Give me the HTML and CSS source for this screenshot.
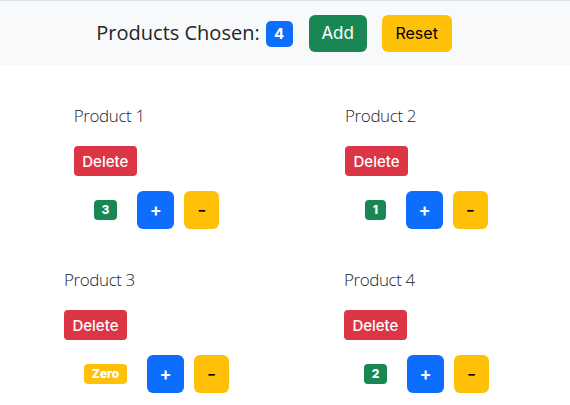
FILE: index.html
```html
<!DOCTYPE html>
<html lang="en">
<head>
<meta charset="utf-8">
<title>Products</title>
<link rel="stylesheet" href="styles.css">
</head>
<body>
  <header class="topbar">
    <span class="chosen">Products Chosen:</span>
    <span class="badge badge-lg bg-blue">4</span>
    <button class="btn btn-green btn-add">Add</button>
    <button class="btn btn-yellow btn-reset">Reset</button>
  </header>
  <main class="products">
    <div class="card">
      <h5 class="card-title">Product 1</h5>
      <button class="btn btn-red btn-delete">Delete</button>
      <div class="counter">
        <span class="badge bg-green">3</span>
        <button class="btn btn-blue btn-plus">+</button>
        <button class="btn btn-yellow btn-minus">-</button>
      </div>
    </div>
    <div class="card">
      <h5 class="card-title">Product 2</h5>
      <button class="btn btn-red btn-delete">Delete</button>
      <div class="counter">
        <span class="badge bg-green">1</span>
        <button class="btn btn-blue btn-plus">+</button>
        <button class="btn btn-yellow btn-minus">-</button>
      </div>
    </div>
    <div class="card">
      <h5 class="card-title">Product 3</h5>
      <button class="btn btn-red btn-delete">Delete</button>
      <div class="counter">
        <span class="badge bg-yellow">Zero</span>
        <button class="btn btn-blue btn-plus">+</button>
        <button class="btn btn-yellow btn-minus">-</button>
      </div>
    </div>
    <div class="card">
      <h5 class="card-title">Product 4</h5>
      <button class="btn btn-red btn-delete">Delete</button>
      <div class="counter">
        <span class="badge bg-green">2</span>
        <button class="btn btn-blue btn-plus">+</button>
        <button class="btn btn-yellow btn-minus">-</button>
      </div>
    </div>
  </main>
</body>
</html>
```
FILE: styles.css
```css
* { box-sizing: border-box; }

body {
  margin: 0;
  font-family: "Open Sans", "Noto Sans", sans-serif;
  color: #212529;
  background: #fff;
}

.topbar {
  height: 65px;
  border-top: 1px solid #dee2e6;
  background: #f8f9fa;
  display: flex;
  align-items: center;
  justify-content: center;
  padding-right: 22px;
}

.chosen {
  font-size: 20px;
  line-height: 24px;
}

.badge {
  display: inline-flex;
  align-items: center;
  justify-content: center;
  height: 20px;
  padding: 0 7.8px;
  border-radius: 4px;
  color: #fff;
  font-family: "Inter", "Noto Sans", sans-serif;
  font-weight: 800;
  font-size: 12px;
  line-height: 1;
}

.badge-lg {
  height: 26px;
  width: 27px;
  padding: 0;
  margin-left: 6px;
  margin-top: 1px;
  border-radius: 5px;
  font-size: 15px;
  font-weight: 700;
}

.bg-blue { background: #0d6efd; }
.bg-green { background: #198754; }
.bg-yellow { background: #ffc107; }

.btn {
  display: inline-flex;
  align-items: center;
  justify-content: center;
  border: 0;
  padding: 0;
  border-radius: 6px;
  font-family: "Inter", "Noto Sans", sans-serif;
  font-size: 16px;
  line-height: 1;
  height: 38px;
  cursor: pointer;
}

.btn-green { background: #198754; color: #fff; }
.btn-yellow { background: #ffc107; color: #000; }
.btn-blue { background: #0d6efd; color: #fff; }
.btn-red { background: #dc3545; color: #fff; }

.btn-add {
  width: 58px;
  height: 37px;
  margin-left: 16px;
  font-size: 17px;
}

.btn-reset {
  width: 70px;
  height: 37px;
  margin-left: 15px;
}

.products {
  display: grid;
  grid-template-columns: repeat(2, 270px);
  justify-items: center;
  row-gap: 40px;
  padding: 40px 0 0 11.5px;
}

.card {
  display: flex;
  flex-direction: column;
  align-items: flex-start;
}

.card-title {
  margin: 0 0 19px;
  font-size: 17px;
  font-weight: 300;
  letter-spacing: -0.4px;
  line-height: 22px;
}

.btn-delete {
  width: 63px;
  height: 30px;
  font-size: 15px;
  font-weight: 500;
  border-radius: 4px;
}

.counter {
  display: flex;
  align-items: center;
  margin-top: 15px;
}

.counter .badge { margin-left: 20px; }

.btn-plus {
  width: 37px;
  margin-left: 20px;
  font-size: 18px;
  font-weight: 600;
}

.btn-minus {
  width: 35px;
  margin-left: 10px;
  font-size: 20px;
  font-weight: 400;
}
```
